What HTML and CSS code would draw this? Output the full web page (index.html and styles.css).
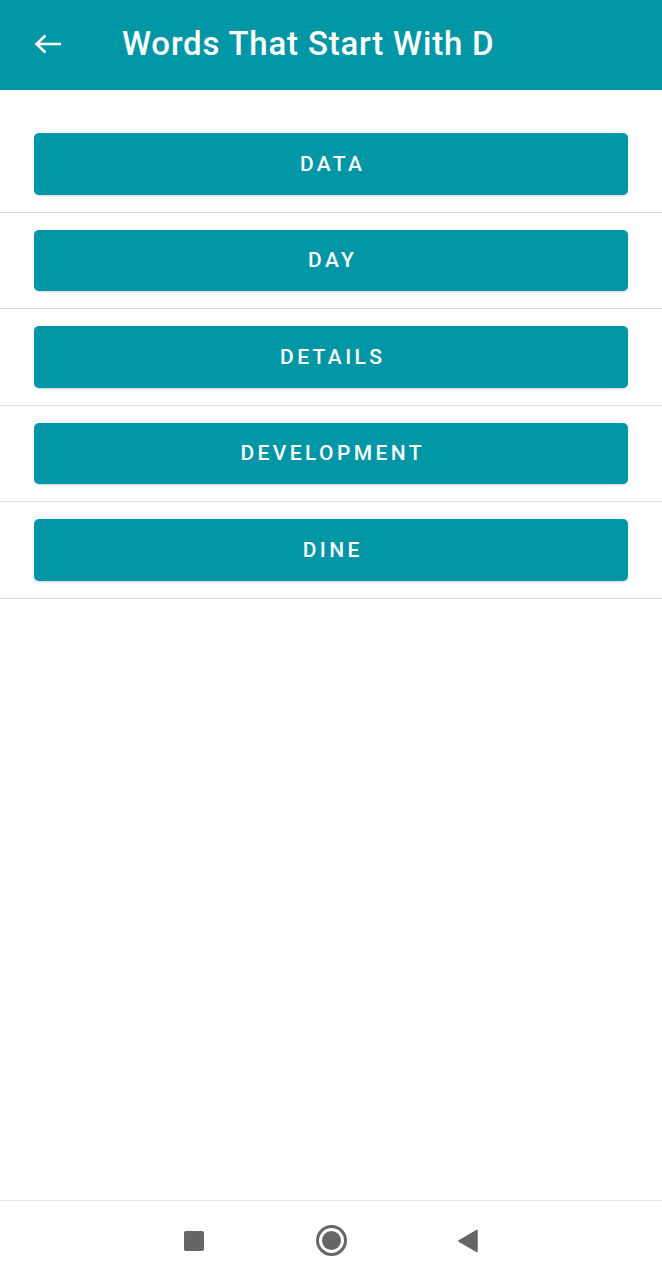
FILE: index.html
```html
<!DOCTYPE html>
<html>
<head>
<meta charset="utf-8">
<link rel="stylesheet" href="styles.css">
</head>
<body>
<div class="screen">
  <header class="appbar">
    <svg class="back" viewBox="0 0 28 20" width="28" height="20">
      <path d="M27 10H3M11.5 1.5L2.5 10l9 8.5" fill="none" stroke="#fff" stroke-width="2.6" stroke-linecap="butt" stroke-linejoin="miter"/>
    </svg>
    <h1 class="title">Words That Start With D</h1>
  </header>
  <main class="list">
    <div class="row"><button class="word">DATA</button></div>
    <div class="row"><button class="word">DAY</button></div>
    <div class="row"><button class="word">DETAILS</button></div>
    <div class="row"><button class="word">DEVELOPMENT</button></div>
    <div class="row"><button class="word">DINE</button></div>
  </main>
  <nav class="navbar">
    <span class="nav-square"></span>
    <span class="nav-circle"><span class="nav-dot"></span></span>
    <svg class="nav-back" viewBox="0 0 20 24" width="20" height="24"><path d="M19 1.5V22.5L1 12Z" fill="#666" stroke="#666" stroke-width="1.5" stroke-linejoin="round"/></svg>
  </nav>
</div>
</body>
</html>
```
FILE: styles.css
```css
* { box-sizing: border-box; }
html, body { margin: 0; padding: 0; }
body { background: #fff; font-family: Roboto, "Noto Sans", "Liberation Sans", sans-serif; }
.screen { width: 662px; height: 1280px; display: flex; flex-direction: column; }
.appbar {
  height: 90px; background: #0096a6; display: flex; align-items: center;
  padding: 0 0 3px 34px; flex-shrink: 0;
}
.back { display: block; margin-right: 60px; }
.title {
  margin: 0; color: #fff; font-weight: 500; font-size: 33px; letter-spacing: 0.8px;
  line-height: 1;
}
.list { flex: 1; padding-top: 26px; }
.row {
  padding: 17px 34px 17px 34px; border-bottom: 1px solid #dcdcdc;
}
.word {
  display: block; width: 100%; height: 61.5px; border: 0; border-radius: 5px;
  background: #0096a6; color: #fff; font-family: Roboto, "Noto Sans", sans-serif;
  font-weight: 500; font-size: 21px; letter-spacing: 3.4px; text-indent: 3.4px;
  box-shadow: 0 1px 2px rgba(0,0,0,0.18);
  padding: 0;
}
.navbar {
  height: 80px; border-top: 1px solid #e6e6e6; display: flex; align-items: center;
  justify-content: center; gap: 0; flex-shrink: 0; padding-bottom: 0;
}
.nav-square { width: 20px; height: 20px; background: #666; border-radius: 2px; margin-right: 112px; }
.nav-circle {
  width: 31px; height: 31px; border: 3px solid #666; border-radius: 50%;
  display: flex; align-items: center; justify-content: center; margin-right: 111px;
}
.nav-dot { width: 19px; height: 19px; border-radius: 50%; background: #666; }
.nav-back { display: block; }
```
